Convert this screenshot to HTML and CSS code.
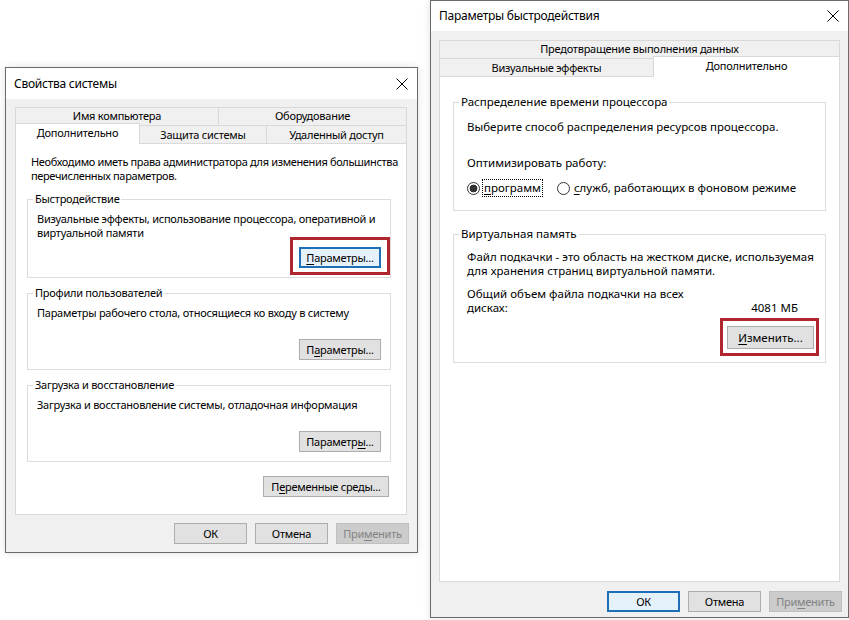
FILE: index.html
```html
<!DOCTYPE html>
<html lang="ru">
<head>
<meta charset="utf-8">
<title>Свойства системы</title>
<link rel="stylesheet" href="styles.css">
</head>
<body>
<div class="screen">
  <section class="dialog dialog-sys">
    <header class="titlebar">
      <span class="title">Свойства системы</span>
      <svg class="close" width="12" height="12" viewBox="0 0 12 12"><path d="M0.5 0.5 L11.5 11.5 M11.5 0.5 L0.5 11.5" stroke="#000" stroke-width="1" fill="none"/></svg>
    </header>
    <div class="dlg-body sys-body">
      <div class="tabs">
        <div class="tab-row">
          <div class="tab t-name">Имя компьютера</div>
          <div class="tab t-hw">Оборудование</div>
        </div>
        <div class="tab-row">
          <div class="tab active t-adv">Дополнительно</div>
          <div class="tab t-prot">Защита системы</div>
          <div class="tab t-remote">Удаленный доступ</div>
        </div>
      </div>
      <div class="panel sys-panel">
        <p class="intro">Необходимо иметь права администратора для изменения большинства<br>перечисленных параметров.</p>
        <fieldset class="group sys-group">
          <legend>Быстродействие</legend>
          <div class="group-text">Визуальные эффекты, использование процессора, оперативной и<br>виртуальной памяти</div>
          <div class="btn-row">
            <span class="mark mark-left"><button class="btn btn-param default"><u>П</u>араметры...</button></span>
          </div>
        </fieldset>
        <fieldset class="group sys-group">
          <legend>Профили пользователей</legend>
          <div class="group-text">Параметры рабочего стола, относящиеся ко входу в систему</div>
          <div class="btn-row">
            <button class="btn btn-param">П<u>а</u>раметры...</button>
          </div>
        </fieldset>
        <fieldset class="group sys-group">
          <legend>Загрузка и восстановление</legend>
          <div class="group-text">Загрузка и восстановление системы, отладочная информация</div>
          <div class="btn-row">
            <button class="btn btn-param">Параметр<u>ы</u>...</button>
          </div>
        </fieldset>
        <div class="env-row">
          <button class="btn btn-env">П<u>е</u>ременные среды...</button>
        </div>
      </div>
      <div class="footer">
        <button class="btn btn-foot">ОК</button>
        <button class="btn btn-foot">Отмена</button>
        <button class="btn btn-foot disabled">При<u>м</u>енить</button>
      </div>
    </div>
  </section>

  <section class="dialog dialog-perf">
    <header class="titlebar">
      <span class="title">Параметры быстродействия</span>
      <svg class="close" width="12" height="12" viewBox="0 0 12 12"><path d="M0.5 0.5 L11.5 11.5 M11.5 0.5 L0.5 11.5" stroke="#000" stroke-width="1" fill="none"/></svg>
    </header>
    <div class="dlg-body perf-body">
      <div class="tabs">
        <div class="tab-row">
          <div class="tab t-dep">Предотвращение выполнения данных</div>
        </div>
        <div class="tab-row">
          <div class="tab t-vis">Визуальные эффекты</div>
          <div class="tab active t-adv2">Дополнительно</div>
        </div>
      </div>
      <div class="panel perf-panel">
        <fieldset class="group perf-group cpu-group">
          <legend>Распределение времени процессора</legend>
          <div class="line">Выберите способ распределения ресурсов процессора.</div>
          <div class="line optimize">Оптимизировать работу:</div>
          <div class="radios">
            <label class="radio-item">
              <span class="radio checked"></span>
              <span class="radio-text focus"><u>п</u>рограмм</span>
            </label>
            <label class="radio-item second">
              <span class="radio"></span>
              <span class="radio-text"><u>с</u>лужб, работающих в фоновом режиме</span>
            </label>
          </div>
        </fieldset>
        <fieldset class="group perf-group vm-group">
          <legend>Виртуальная память</legend>
          <div class="line">Файл подкачки - это область на жестком диске, используемая<br>для хранения страниц виртуальной памяти.</div>
          <div class="total-row">
            <span class="total-label">Общий объем файла подкачки на всех<br>дисках:</span>
            <span class="total-value">4081 МБ</span>
          </div>
          <div class="btn-row">
            <span class="mark mark-right"><button class="btn btn-change"><u>И</u>зменить...</button></span>
          </div>
        </fieldset>
      </div>
      <div class="footer">
        <button class="btn btn-foot default">ОК</button>
        <button class="btn btn-foot">Отмена</button>
        <button class="btn btn-foot disabled">При<u>м</u>енить</button>
      </div>
    </div>
  </section>
</div>
</body>
</html>
```

FILE: styles.css
```css
* { box-sizing: border-box; }

html, body {
  margin: 0;
  padding: 0;
  background: #ffffff;
}

body {
  font-family: "Noto Sans", "Liberation Sans", sans-serif;
  font-size: 11px;
  letter-spacing: -0.25px;
  line-height: 14px;
  color: #000;
}

.screen {
  width: 849px;
  height: 620px;
  overflow: hidden;
  display: flex;
  align-items: flex-start;
  gap: 12px;
  padding-left: 5px;
}

.dialog {
  border: 1px solid #6a6a6a;
  background: #f0f0f0;
  display: flex;
  flex-direction: column;
  box-shadow: 0 0 8px rgba(0, 0, 0, 0.12);
}

.dialog-sys {
  width: 413px;
  height: 486px;
  margin-top: 67px;
}

.dialog-perf {
  width: 419px;
  height: 618px;
}

.titlebar {
  height: 31px;
  flex: none;
  background: #fff;
  display: flex;
  align-items: center;
  justify-content: space-between;
  padding: 0 9px 0 8px;
  font-size: 12px;
}

.dialog-perf .titlebar { height: 30px; }

.close { display: block; }

.dlg-body {
  flex: 1;
  display: flex;
  flex-direction: column;
  padding-top: 8px;
}

.sys-body { padding-left: 9px; padding-right: 10px; }
.perf-body { padding-left: 8px; padding-right: 8px; padding-top: 9px; }

/* tabs */
.tab-row {
  display: flex;
  align-items: flex-start;
  height: 18px;
}

.tab {
  height: 18px;
  border: 1px solid #d9d9d9;
  border-bottom: none;
  margin-left: -1px;
  background: #f0f0f0;
  text-align: center;
  line-height: 16px;
  white-space: nowrap;
}

.tab-row + .tab-row .tab { line-height: 18px; }
.tab-row + .tab-row .tab.active { line-height: 17px; }

.tab:first-child { margin-left: 0; }

.tab.active {
  background: #fff;
  position: relative;
  z-index: 1;
  height: 21px;
  margin-top: -2px;
}

.t-name { width: 204px; }
.t-hw { width: 189px; }
.t-adv { width: 125px; }
.t-prot { width: 128px; }
.t-remote { width: 141px; }

.t-dep { width: 401px; }
.t-vis { width: 215px; }
.t-adv2 { width: 187px; }

/* panel */
.panel {
  background: #fff;
  border: 1px solid #d9d9d9;
  display: flex;
  flex-direction: column;
}

.sys-panel {
  height: 372px;
  padding: 11px 15px 0 11px;
}

.perf-panel {
  height: 506px;
  padding: 18px 13px 0 13px;
  font-size: 11.5px;
  letter-spacing: 0;
}

.intro {
  margin: 0 0 0 4px;
  white-space: nowrap;
  letter-spacing: -0.35px;
}

/* group boxes */
.group {
  margin: 0;
  border: 1px solid #dcdcdc;
  min-width: 0;
}

.group legend {
  padding: 0 2px;
  line-height: 14px;
}

.sys-group {
  margin-top: 9px;
  padding: 6px 9px 9px 9px;
}

.sys-group + .sys-group { margin-top: 8px; }

.sys-group legend { margin-left: -4px; }

.group-text { min-height: 26px; }

.btn-row {
  display: flex;
  justify-content: flex-end;
  margin-top: 7px;
}

.env-row {
  display: flex;
  justify-content: flex-end;
  margin-top: 14px;
  margin-right: 2px;
}

.perf-group legend { margin-left: -8px; }

.cpu-group {
  padding: 11px 11px 15px 13px;
}

.vm-group {
  margin-top: 16px;
  padding: 9px 11px 13px 13px;
}

.optimize { margin-top: 22px; }

.radios {
  display: flex;
  align-items: center;
  margin-top: 11px;
  height: 14px;
}

.radio-item {
  display: flex;
  align-items: center;
}

.radio-item.second { margin-left: 14px; }

.radio {
  width: 13px;
  height: 13px;
  border: 1px solid #333;
  border-radius: 50%;
  background: #fff;
  flex: none;
}

.radio.checked {
  background: radial-gradient(circle, #333 0 3.6px, #fff 4.2px);
}

.radio-text {
  margin-left: 2px;
  padding: 1px 1px;
  border: 1px solid transparent;
  line-height: 14px;
}

.radio-text.focus {
  border: 1px dotted #000;
}

.total-row {
  display: flex;
  justify-content: space-between;
  align-items: flex-end;
  margin-top: 9px;
}

.total-value { margin-right: 16px; }

.vm-group .btn-row { margin-top: 11px; }

/* buttons */
.btn {
  appearance: none;
  -webkit-appearance: none;
  font-family: inherit;
  font-size: 11px;
  letter-spacing: -0.25px;
  line-height: 14px;
  color: #000;
  background: #e1e1e1;
  border: 1px solid #adadad;
  border-radius: 0;
  padding: 0;
  margin: 0;
  height: 22px;
  text-align: center;
}

.perf-panel .btn { font-size: 11.5px; letter-spacing: 0; }

.btn u, .radio-text u {
  text-decoration: underline;
  text-underline-offset: 2px;
}

.btn.default {
  border: 2px solid #1e6fb8;
  background: #e5f1fb;
}

.btn.disabled {
  background: #cccccc;
  border-color: #bfbfbf;
  color: #838383;
}

.btn-param { width: 82px; height: 21px; }
.btn-env { width: 126px; height: 21px; }
.btn-change { width: 87px; height: 23px; }

.footer {
  display: flex;
  justify-content: flex-end;
  gap: 8px;
  margin-top: 8px;
  margin-right: -2px;
}

.btn-foot {
  width: 73px;
  height: 21px;
}

.perf-body .footer { margin-top: 9px; }

/* red annotation frames */
.mark {
  position: relative;
  display: inline-flex;
}

.mark::after {
  content: "";
  position: absolute;
  border: 3px solid #b0262e;
  pointer-events: none;
}

.mark-left::after {
  left: -9px;
  right: -9px;
  top: -10px;
  bottom: -7px;
}

.mark-right::after {
  left: -7px;
  right: -5px;
  top: -8px;
  bottom: -7px;
}
```
